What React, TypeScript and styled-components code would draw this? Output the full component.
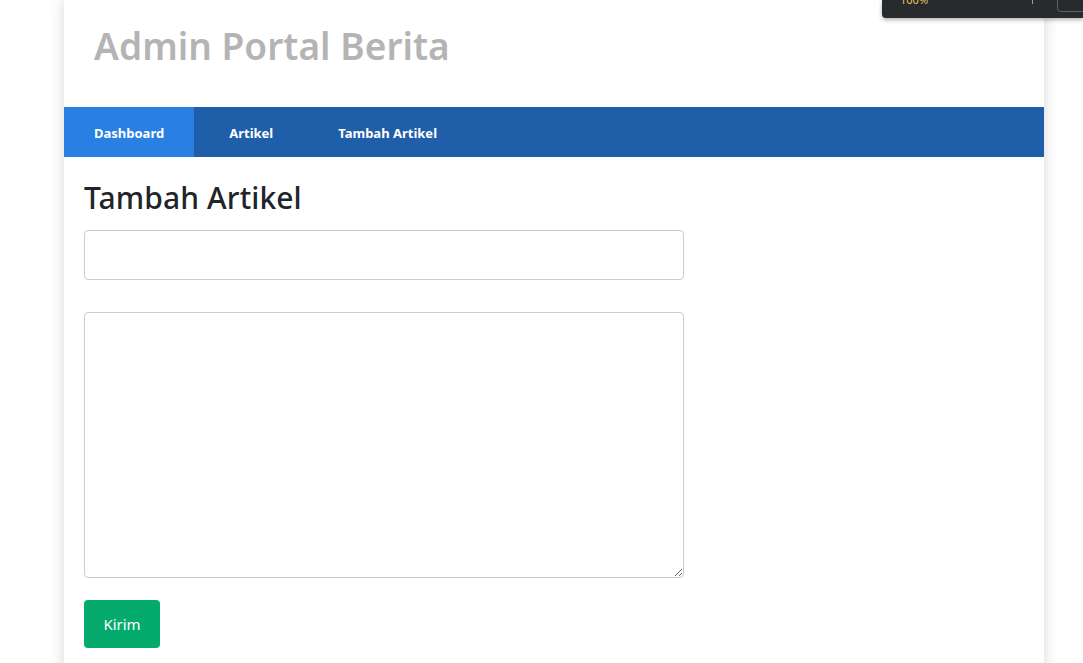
import React from "react";
import styled, { createGlobalStyle } from "styled-components";

const Global = createGlobalStyle`
  html, body { margin: 0; padding: 0; background: #ffffff; }
  body { font-family: "Segoe UI", "Noto Sans", "Open Sans", sans-serif; color: #212529; overflow: hidden; }
  * { box-sizing: border-box; }
`;

const Page = styled.div`
  width: 1083px;
  height: 663px;
  position: relative;
  overflow: hidden;
`;

const Container = styled.div`
  width: 980px;
  margin-left: 64px;
  min-height: 700px;
  background: #fff;
  box-shadow: 0 0 14px rgba(0, 0, 0, 0.16);
  display: flex;
  flex-direction: column;
`;

const Header = styled.header`
  height: 107px;
  display: flex;
  align-items: center;
  padding: 0 30px 16px;
`;

const Title = styled.h1`
  margin: 0;
  font-size: 37px;
  font-weight: 600;
  color: #b4b4b4;
  letter-spacing: 0.05px;
`;

const Nav = styled.nav`
  height: 50px;
  background: #1f5ea8;
  display: flex;
  gap: 5px;
`;

const NavItem = styled.a<{ $active?: boolean }>`
  display: flex;
  align-items: center;
  padding: 2px 30px 0;
  background: ${(p) => (p.$active ? "#2a80e2" : "transparent")};
  color: #fff;
  font-size: 13px;
  font-weight: 700;
  text-decoration: none;
  letter-spacing: 0;
`;

const Main = styled.main`
  padding: 19px 20px 20px;
  display: flex;
  flex-direction: column;
`;

const Heading = styled.h2`
  margin: 0 0 10px;
  font-size: 30px;
  font-weight: 500;
  line-height: 44px;
  color: #212529;
  letter-spacing: 0.1px;
`;

const Form = styled.form`
  display: flex;
  flex-direction: column;
  align-items: flex-start;
`;

const Input = styled.input`
  width: 600px;
  height: 50px;
  border: 1px solid #cccccc;
  border-radius: 4px;
  margin-bottom: 32px;
  padding: 0 12px;
  font: inherit;
`;

const TextArea = styled.textarea`
  width: 600px;
  height: 266px;
  border: 1px solid #cccccc;
  border-radius: 4px;
  margin: 0 0 22px;
  padding: 12px;
  font: inherit;
  display: block;
`;

const Button = styled.button`
  width: 76px;
  height: 48px;
  background: #05aa6d;
  border: none;
  border-radius: 4px;
  color: #fff;
  font-family: inherit;
  font-size: 15px;
`;

const DevTip = styled.div`
  position: absolute;
  top: 0;
  left: 882px;
  width: 201px;
  height: 18px;
  background: #292a2d;
  border-bottom-left-radius: 4px;
  box-shadow: 0 2px 4px rgba(0, 0, 0, 0.3);
`;

const TipText = styled.span`
  position: absolute;
  top: -6px;
  left: 18px;
  font-size: 11px;
  line-height: 12px;
  color: #e8c25a;
`;

const TipBar = styled.span`
  position: absolute;
  top: 0;
  left: 150px;
  width: 1px;
  height: 4px;
  background: #9aa0a6;
`;

const TipBox = styled.span`
  position: absolute;
  top: -6px;
  left: 175px;
  width: 40px;
  height: 18px;
  border: 1px solid #5f6368;
  border-radius: 4px;
`;

export default function App() {
  return (
    <Page>
      <Global />
      <Container>
        <Header>
          <Title>Admin Portal Berita</Title>
        </Header>
        <Nav>
          <NavItem $active href="#">Dashboard</NavItem>
          <NavItem href="#">Artikel</NavItem>
          <NavItem href="#">Tambah Artikel</NavItem>
        </Nav>
        <Main>
          <Heading>Tambah Artikel</Heading>
          <Form onSubmit={(e) => e.preventDefault()}>
            <Input type="text" />
            <TextArea />
            <Button type="submit">Kirim</Button>
          </Form>
        </Main>
      </Container>
      <DevTip>
        <TipText>100%</TipText>
        <TipBar />
        <TipBox />
      </DevTip>
    </Page>
  );
}
